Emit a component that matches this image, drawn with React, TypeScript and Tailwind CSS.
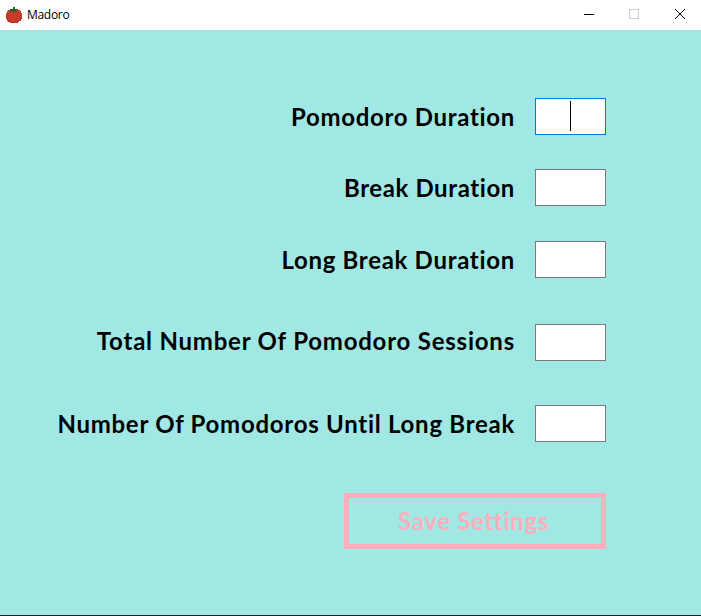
import React from "react";

const labelFont = "font-['Lato','Liberation_Sans',sans-serif] font-bold text-[24px] leading-[30px]";

type Field = { label: string; row: string; text: string; focused?: boolean };

const fields: Field[] = [
  { label: "Pomodoro Duration", row: "mt-[68px]", text: "tracking-[0.68px] pt-[4px]", focused: true },
  { label: "Break Duration", row: "mt-[34px]", text: "tracking-[0.6px] pt-[4px]" },
  { label: "Long Break Duration", row: "mt-[35px]", text: "tracking-[0.7px] pt-[4px]" },
  { label: "Total Number Of Pomodoro Sessions", row: "mt-[46px]", text: "tracking-[0.78px] pt-[2px]" },
  { label: "Number Of Pomodoros Until Long Break", row: "mt-[44px]", text: "tracking-[0.73px] pt-[4px]" },
];

function Tomato() {
  return (
    <svg width="16" height="16" viewBox="0 0 16 16" shapeRendering="crispEdges">
      <path d="M4 2h8v1h2v1h1v2h1v5h-1v2h-1v1h-2v2H4v-1H2v-1H1v-2H0V6h1V4h1V3h2z" fill="#c83a2a" />
      <path d="M0 9h1v2h1v2h2v2h7v-1h2v-1h1v-2h2v1h-1v2h-2v1h-2v1H5v-1H2v-2H1v-2H0z" fill="#b33125" />
      <path d="M7 0h2v2h3v1h-2v1h1v1H9V4H8v2H7V4H6v1H4V4h1V3H4V2h3z" fill="#285c20" />
    </svg>
  );
}

export default function App() {
  return (
    <div className="flex h-[616px] w-[701px] flex-col overflow-hidden border-b border-[#19212b] bg-[#a1e8e4]">
      <header className="flex h-[30px] shrink-0 items-center bg-white pl-[6px]">
        <Tomato />
        <span className="ml-[5px] font-['Open_Sans','Noto_Sans',sans-serif] text-[12px] leading-[16px] tracking-[-0.3px] text-black">
          Madoro
        </span>
        <svg className="ml-auto" width="118" height="30" viewBox="0 0 118 30" fill="none">
          <path d="M1 14.5h10" stroke="#000" />
          <rect x="46.5" y="9.5" width="9" height="9" stroke="#ccc" />
          <path d="M92 9l10 10M102 9l-10 10" stroke="#000" />
        </svg>
      </header>
      <main className="flex flex-col items-end pr-[95px]">
        {fields.map((f) => (
          <label key={f.label} className={`flex h-[37px] items-start gap-[20px] ${f.row}`}>
            <span className={`whitespace-nowrap text-black ${labelFont} ${f.text}`}>{f.label}</span>
            <span
              className={`flex h-[37px] w-[71px] justify-center border bg-white pt-[2px] ${f.focused ? "border-[#0078d7]" : "border-[#7a7a7a]"}`}
            >
              {f.focused && <span className="h-[30px] w-px bg-black" />}
            </span>
          </label>
        ))}
        <button
          className={`mt-[51px] flex h-[56px] w-[262px] items-center justify-center border-[5px] border-[#ffaebc] pr-[3px] pb-[1px] tracking-[0.65px] text-[#ffaebc] ${labelFont}`}
        >
          Save Settings
        </button>
      </main>
    </div>
  );
}
